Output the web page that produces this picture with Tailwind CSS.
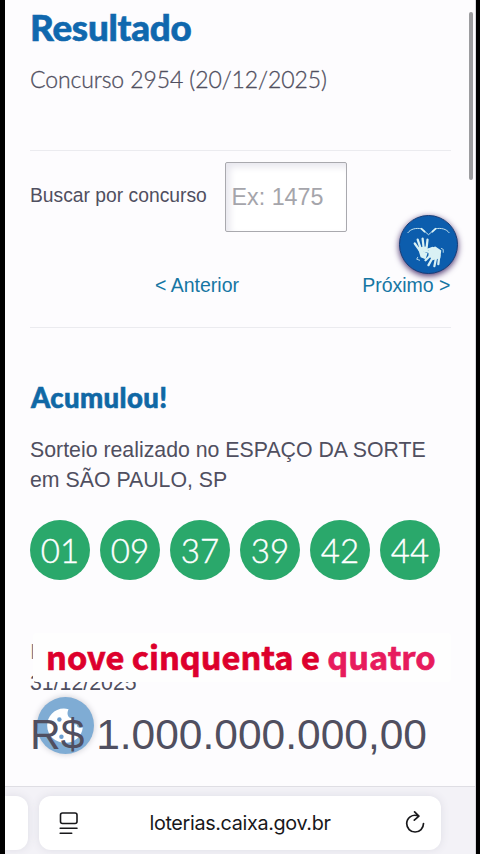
<!DOCTYPE html>
<html lang="pt-BR">
<head>
<meta charset="utf-8">
<meta name="viewport" content="width=device-width">
<title>Resultado</title>
<script src="https://cdn.jsdelivr.net/npm/@tailwindcss/browser@4"></script>
</head>
<body class="bg-black">
<div class="relative mx-auto flex h-[854px] w-[471px] flex-col overflow-hidden border-r border-[#d8d8dc] bg-[#fdfcfe] font-['Liberation_Sans',sans-serif] text-[#504f60]">
  <main class="h-[786px] shrink-0 overflow-hidden pr-[24px] pl-[25.5px]">
    <header class="h-[151px] border-b border-[#ebebef] font-['Lato',sans-serif] whitespace-nowrap">
      <h1 class="pt-[5px] text-[36.8px] leading-[44px] font-black tracking-[-0.25px] text-[#1068ae] [-webkit-text-stroke:0.6px_currentColor]">Resultado</h1>
      <p class="pt-[15px] text-[23px] leading-[30px] font-light tracking-[-0.1px] [-webkit-text-stroke:0.3px_currentColor]">Concurso 2954 (20/12/2025)</p>
    </header>
    <section class="h-[177px] border-b border-[#ebebef]">
      <div class="flex h-[81px] items-end whitespace-nowrap">
        <label class="w-[194.5px] pb-[22px] text-[19.3px] leading-[28px]">Buscar por concurso</label>
        <div class="flex h-[70px] w-[122px] items-center rounded-[2px] border border-[#a9a9ae] bg-white pl-[6px] text-[23.3px] text-[#a5a5ab] shadow-[inset_4px_4px_7px_#e8e7ee]">Ex: 1475</div>
      </div>
      <nav class="flex justify-between pt-[39px] pl-[125px] text-[19.5px] leading-[28px] whitespace-nowrap text-[#1676a3]"><a>&lt; Anterior</a><a>Próximo &gt;</a></nav>
    </section>
    <section class="pt-[53px] whitespace-nowrap">
      <h2 class="pl-[1px] font-['Lato',sans-serif] text-[27.5px] leading-[34px] font-black tracking-[0.4px] text-[#1068a5] [-webkit-text-stroke:0.6px_currentColor]">Acumulou!</h2>
      <p class="pt-[20px] text-[21.3px] leading-[30px]">Sorteio realizado no ESPAÇO DA SORTE<br>em SÃO PAULO, SP</p>
      <ul class="mt-[25px] flex gap-[10px] font-['Lato',sans-serif] text-[33px] leading-[60px] font-light text-white [-webkit-text-stroke:0.4px_currentColor]">
        <li class="size-[60px] rounded-full bg-[#2aa86b] text-center">01</li>
        <li class="size-[60px] rounded-full bg-[#2aa86b] text-center">09</li>
        <li class="size-[60px] rounded-full bg-[#2aa86b] text-center">37</li>
        <li class="size-[60px] rounded-full bg-[#2aa86b] text-center">39</li>
        <li class="size-[60px] rounded-full bg-[#2aa86b] text-center">42</li>
        <li class="size-[60px] rounded-full bg-[#2aa86b] text-center">44</li>
      </ul>
      <p class="mt-[57px] text-[21.3px] leading-[31px]"><span class="text-[#7b7a86]">I</span><br>31/12/2025</p>
      <p class="relative z-20 pt-[9px] text-[42.5px] leading-[54px]">R$ 1.000.000.000,00</p>
    </section>
  </main>
  <footer class="flex h-[68px] shrink-0 gap-[11px] border-t border-[#dfdee4] bg-[#f3f2f7] pt-[9px]">
    <div class="h-[54px] w-[23px] rounded-r-[12px] bg-white shadow-[0_0_8px_#dedde5]"></div>
    <div class="flex h-[54px] w-[402px] items-center justify-between rounded-[12px] bg-white pr-[16px] pl-[20px] text-[#18181b] shadow-[0_0_8px_#dedde5]">
      <svg class="h-[24px] w-[20px]" viewBox="0 0 20 24" fill="none" stroke="currentColor" stroke-width="1.6" stroke-linecap="round"><rect x="1.5" y="2" width="16.5" height="10.5" rx="2"/><path d="M1.2 17.2h16.8M1.2 22.2h11.5"/></svg>
      <span class="pt-[2px] pr-[3px] font-['Inter',sans-serif] text-[19.8px] tracking-[-0.35px]">loterias.caixa.gov.br</span>
      <svg class="h-[24px] w-[20px]" viewBox="0 0 20 24" fill="none" stroke="currentColor" stroke-width="1.7" stroke-linecap="round" stroke-linejoin="round"><path d="M13 4.8C7 2.7 1.7 7.2 1.7 12.6a8.4 8.4 0 0 0 16.8 0M9.6.9l4.3 4.2-4.6 4"/></svg>
    </div>
  </footer>

  <!-- floating widgets -->
  <div class="absolute top-[12px] right-[2px] h-[168px] w-[4px] rounded-full bg-[#9c9c9f]"></div>
  <div class="absolute top-[215px] left-[394px] size-[59px] rounded-full border border-[#173d78] bg-[#0c5dad] shadow-[0_2px_6px_#49306c]">
    <svg class="size-full" viewBox="0 0 58 58" fill="none" stroke="#d9f1f4" stroke-linecap="round" stroke-linejoin="round">
      <path stroke-width=".9" d="M8 17c3-4 8-5 14-4l7 6 7-6c6-1 11 0 14 4"/>
      <path stroke-width="1.8" d="M22 13l3 3M36 13l-3 3"/>
      <path fill="#d9f1f4" stroke="none" d="M18 32l9-1 1 3-4 2 4 2-2 6-5-2z"/>
      <path stroke-width="2.3" d="M20 35l-5-7M21 33l-3-9M24 32l-1-9M27 33l1-9"/>
      <path stroke-width="2.3" d="M33 32.5l-8 3 7 1.5"/>
      <path fill="#d9f1f4" stroke="none" d="M29 33l7-2 6 4-1 8-8 2-4-5z"/>
      <path stroke-width="2.3" d="M32 39l-6 6M34 41l-5 9M37 41l-2 10M40 40l-1 9"/>
      <path stroke-width=".8" d="M42 33l2 1v3M18 42l-1 2 3 1"/>
    </svg>
  </div>
  <div class="absolute top-[697px] left-[32px] z-10 size-[57px] rounded-full bg-[#7facd4] shadow-[0_0_6px_#c8c8d0]">
    <svg class="size-full" viewBox="0 0 56 56"><path fill="#fff" d="M31 12c-12-3-21 6-21 16s8 17 18 17c9 0 16-6 17-15-3 1-6 0-6-3-4 0-6-3-5-6-4-1-5-5-3-9z"/><g fill="#6c9fd0"><circle cx="22" cy="22" r="2.2"/><circle cx="24" cy="39" r="2.2"/><circle cx="35" cy="36" r="1.3"/></g></svg>
  </div>
  <div class="absolute top-[633px] left-[28px] z-30 h-[49px] w-[418px] rounded-[4px] bg-[#fefefe] pl-[13.5px] font-['Noto_Sans_CJK_SC',sans-serif] text-[32.6px] leading-[46px] font-bold whitespace-nowrap text-[#dd002c] [-webkit-text-stroke:0.7px_currentColor]">nove cinquenta e <span class="text-[#e71b5d]">quatro</span></div>
</div>
</body>
</html>
